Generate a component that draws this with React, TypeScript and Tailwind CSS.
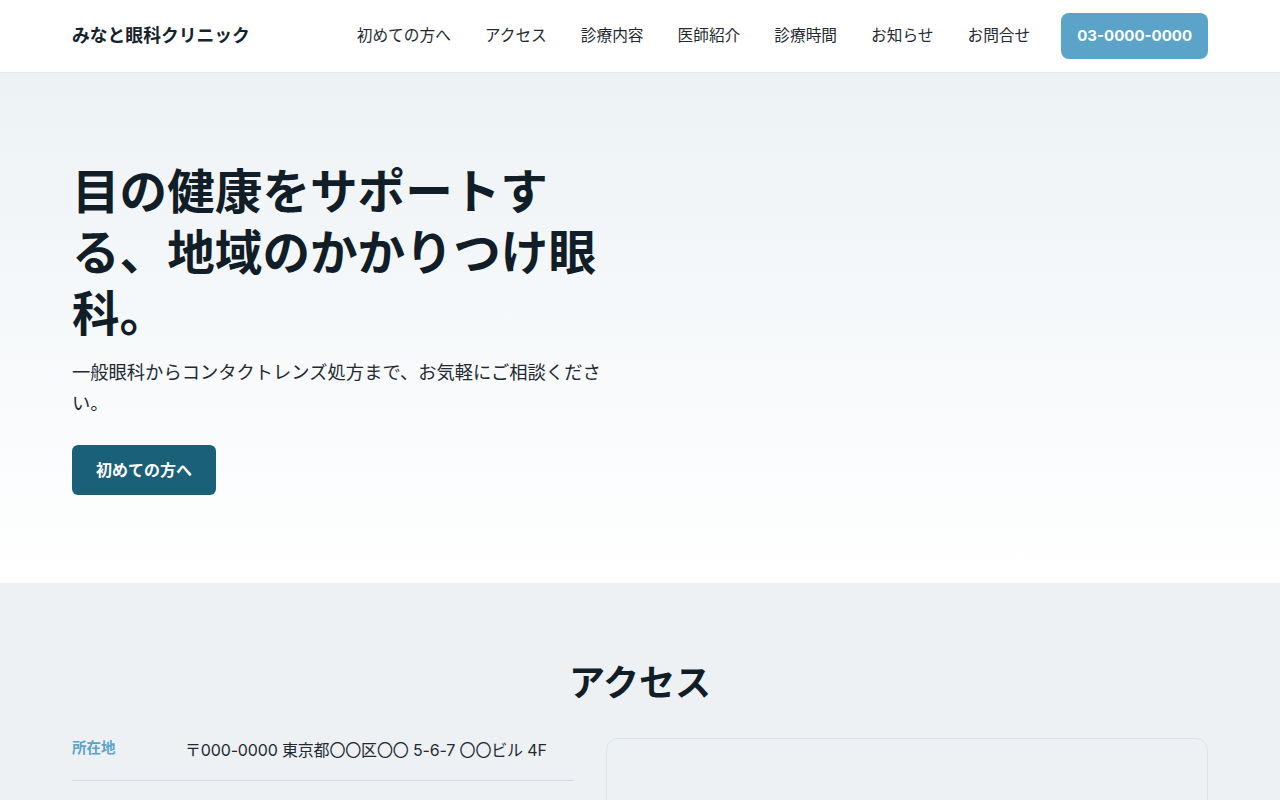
import React from "react";

const navItems = ["初めての方へ", "アクセス", "診療内容", "医師紹介", "診療時間", "お知らせ", "お問合せ"];

const Header = () => (
	<header className="bg-white border-b border-[#e2e8ec] h-[73px]">
		<div className="mx-auto max-w-[1136px] h-[72px] flex items-center justify-between">
			<div className="text-[17.8px] font-bold text-[#16222c]">みなと眼科クリニック</div>
			<nav className="flex items-center">
				<ul className="flex items-center gap-[34px] text-[15.7px] text-[#1f2a33]">
					{navItems.map((item) => (
						<li key={item}>
							<a href="#">{item}</a>
						</li>
					))}
				</ul>
				<a
					href="#"
					className="ml-[31px] h-[46px] px-[16px] flex items-center rounded-lg bg-[#5ba3c8] text-white text-[15px] font-bold"
				>
					03-0000-0000
				</a>
			</nav>
		</div>
	</header>
);

const Hero = () => (
	<section className="bg-gradient-to-b from-[#edf2f5] to-white py-[88px]">
		<div className="mx-auto max-w-[1136px] grid grid-cols-2 gap-16">
			<div>
				<h1 className="text-[47.6px] leading-[61px] font-bold text-[#111d27]">
					目の健康をサポートする、地域のかかりつけ眼科。
				</h1>
				<p className="mt-[13px] text-[18.3px] leading-[31px] text-[#1f2a33]">
					一般眼科からコンタクトレンズ処方まで、お気軽にご相談ください。
				</p>
				<a
					href="#"
					className="mt-[26px] inline-flex items-center h-[50px] px-6 rounded-md bg-[#1b6079] text-white text-[16px] font-bold"
				>
					初めての方へ
				</a>
			</div>
			<div />
		</div>
	</section>
);

const Access = () => (
	<section className="bg-[#edf1f4] pt-20 pb-16">
		<div className="mx-auto max-w-[1136px]">
			<h2 className="text-center text-[36px] leading-[40px] font-bold text-[#111d27] mb-[35px]">アクセス</h2>
			<div className="grid grid-cols-[1fr_1.2fr] gap-8 items-start">
				<dl>
					<div className="flex pb-[18px] border-b border-[#d3d9de]">
						<dt className="w-[113px] shrink-0 text-[14.5px] leading-[20px] font-bold text-[#5ba3c8]">所在地</dt>
						<dd className="text-[16px] leading-[24px] tracking-[-0.01em] text-[#1f2a33]">〒000-0000 東京都〇〇区〇〇 5-6-7 〇〇ビル 4F</dd>
					</div>
					<div className="flex pt-[24px] pb-[18px] border-b border-[#d3d9de]">
						<dt className="w-[113px] shrink-0 text-[14.5px] leading-[20px] font-bold text-[#5ba3c8]">最寄り駅</dt>
						<dd className="text-[16px] leading-[24px] text-[#1f2a33]">〇〇線「〇〇駅」徒歩3分</dd>
					</div>
				</dl>
				<div className="h-[320px] rounded-xl border border-[#dde3e8] bg-[#edf1f4]" />
			</div>
		</div>
	</section>
);

export default function App() {
	return (
		<div className="min-h-screen bg-white" style={{ fontFamily: "Inter, 'Noto Sans CJK JP', sans-serif" }}>
			<Header />
			<Hero />
			<Access />
		</div>
	);
}
